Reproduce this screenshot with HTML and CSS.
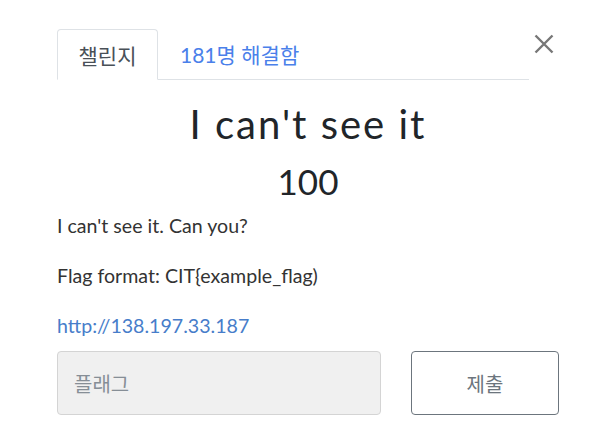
FILE: index.html
```html
<!DOCTYPE html>
<html lang="ko">
<head>
<meta charset="utf-8">
<title>Challenge</title>
<link rel="stylesheet" href="styles.css">
</head>
<body>
<div class="modal">
  <div class="top-row">
    <ul class="tabs">
      <li class="tab active">챌린지</li>
      <li class="tab solves">181명 해결함</li>
    </ul>
    <button class="close" aria-label="닫기">
      <svg width="20" height="20" viewBox="0 0 20 20"><path d="M1.5 1.5 L18.5 18.5 M18.5 1.5 L1.5 18.5" stroke="#777" stroke-width="2.4" fill="none"/></svg>
    </button>
  </div>
  <h2 class="name">I can't see it</h2>
  <h3 class="value">100</h3>
  <div class="desc">
    <p>I can't see it. Can you?</p>
    <p>Flag format: CIT{example_flag)</p>
    <p><a href="#" class="link">http://138.197.33.187</a></p>
  </div>
  <div class="submit-row">
    <div class="flag-input">플래그</div>
    <button class="submit">제출</button>
  </div>
</div>
</body>
</html>
```
FILE: styles.css
```css
html, body {
  margin: 0;
  padding: 0;
  background: #fff;
}
body {
  font-family: Lato, "Noto Sans CJK KR", sans-serif;
  color: #212529;
}
.modal {
  padding: 29px 54px 0 57px;
}
.top-row {
  display: flex;
  align-items: flex-start;
}
.tabs {
  flex: 1;
  display: flex;
  list-style: none;
  margin: 0;
  padding: 0;
  border-bottom: 1px solid #dee2e6;
  height: 50px;
}
.tab {
  font-size: 21px;
  padding: 0 22px;
  height: 50px;
  display: flex;
  align-items: center;
  box-sizing: border-box;
}
.tab.active {
  color: #495057;
  border: 1px solid #dee2e6;
  border-bottom: 1px solid #fff;
  border-radius: 4px 4px 0 0;
  background: #fff;
  height: 51px;
  width: 101px;
  padding: 0;
  justify-content: center;
}
.tab.solves {
  color: #4a80ea;
}
.close {
  width: 30px;
  height: 30px;
  padding: 0;
  border: 0;
  background: none;
  display: flex;
  align-items: center;
  justify-content: center;
}
.name {
  font-weight: 400;
  font-size: 40px;
  letter-spacing: 2px;
  text-align: center;
  margin: 20px 0 0;
  line-height: 48px;
}
.value {
  font-weight: 400;
  font-size: 35px;
  text-align: center;
  margin: 12px 0 0;
  line-height: 42px;
}
.desc {
  margin-top: 12px;
  font-size: 19.6px;
  color: #333;
}
.desc p {
  margin: 0 0 26px;
  line-height: 24px;
}
.desc p:last-child {
  margin-bottom: 0;
}
.link {
  color: #477dca;
  text-decoration: none;
}
.submit-row {
  display: flex;
  gap: 30px;
  margin-top: 13px;
}
.flag-input {
  width: 324px;
  height: 64px;
  box-sizing: border-box;
  background: #f0f0f0;
  border: 1px solid #d4d4d4;
  border-radius: 4px;
  display: flex;
  align-items: center;
  padding-left: 16px;
  font-size: 20px;
  color: #868e96;
}
.submit {
  width: 148px;
  height: 64px;
  box-sizing: border-box;
  background: #fff;
  border: 1px solid #6c757d;
  border-radius: 4px;
  font-family: Lato, "Noto Sans CJK KR", sans-serif;
  font-size: 20px;
  color: #6c757d;
}
```
